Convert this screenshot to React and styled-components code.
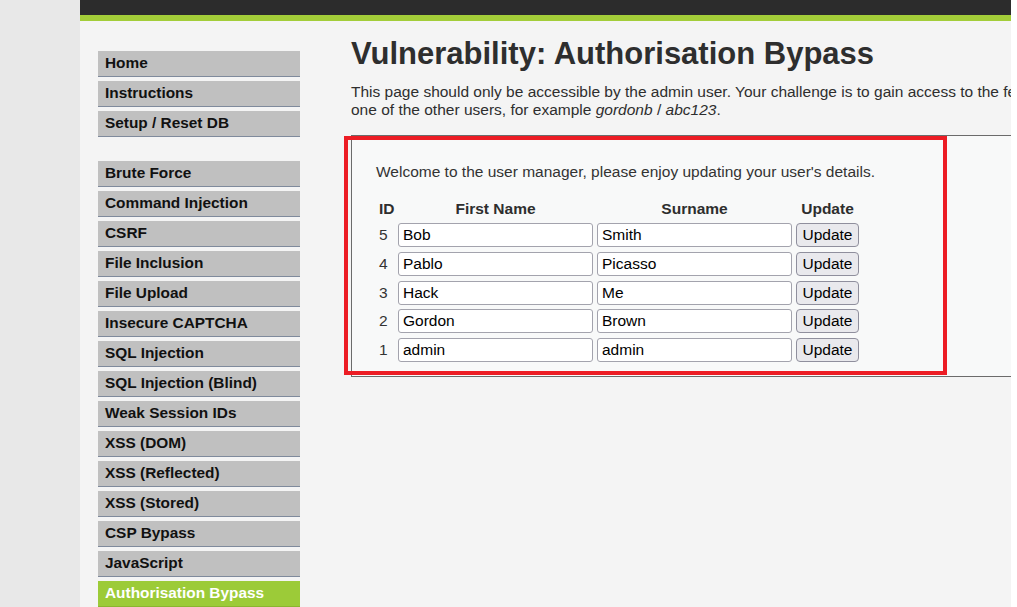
import React from 'react';
import styled, { createGlobalStyle } from 'styled-components';

const GlobalStyle = createGlobalStyle`
    html, body {
        margin: 0;
        padding: 0;
        background: #ffffff;
    }
    body {
        font-family: "Liberation Sans", Arial, sans-serif;
    }
`

const menuGroups = [
    ['Home', 'Instructions', 'Setup / Reset DB'],
    [
        'Brute Force',
        'Command Injection',
        'CSRF',
        'File Inclusion',
        'File Upload',
        'Insecure CAPTCHA',
        'SQL Injection',
        'SQL Injection (Blind)',
        'Weak Session IDs',
        'XSS (DOM)',
        'XSS (Reflected)',
        'XSS (Stored)',
        'CSP Bypass',
        'JavaScript',
        'Authorisation Bypass',
    ],
];

const users = [
    { id: 5, first: 'Bob', last: 'Smith' },
    { id: 4, first: 'Pablo', last: 'Picasso' },
    { id: 3, first: 'Hack', last: 'Me' },
    { id: 2, first: 'Gordon', last: 'Brown' },
    { id: 1, first: 'admin', last: 'admin' },
];

const ACTIVE = 'Authorisation Bypass';

export default function App() {
    return (
        <Page>
            <GlobalStyle />
            <Gutter />
            <Main>
                <Header />
                <Body>
                    <Menu>
                        {menuGroups.map((group, i) => (
                            <MenuGroup key={i}>
                                {group.map(item => (
                                    <MenuItem key={item} active={item === ACTIVE}>
                                        {item}
                                    </MenuItem>
                                ))}
                            </MenuGroup>
                        ))}
                    </Menu>

                    <Content>
                        <Title>Vulnerability: Authorisation Bypass</Title>
                        <Intro>
                            This page should only be accessible by the admin user. Your challenge is to gain access to the features using
                            <br />
                            one of the other users, for example <i>gordonb</i> / <i>abc123</i>.
                        </Intro>

                        <Panel>
                            <Welcome>Welcome to the user manager, please enjoy updating your user's details.</Welcome>
                            <UserGrid>
                                <HeadCell align="left">ID</HeadCell>
                                <HeadCell>First Name</HeadCell>
                                <HeadCell>Surname</HeadCell>
                                <HeadCell>Update</HeadCell>
                                {users.map(u => (
                                    <React.Fragment key={u.id}>
                                        <IdCell>{u.id}</IdCell>
                                        <TextInput defaultValue={u.first} />
                                        <TextInput defaultValue={u.last} />
                                        <UpdateButton>Update</UpdateButton>
                                    </React.Fragment>
                                ))}
                            </UserGrid>
                        </Panel>
                    </Content>
                </Body>
            </Main>
            <Highlight />
        </Page>
    );
}

const Page = styled.div`
    position: relative;
    width: 1017px;
    height: 607px;
    overflow: hidden;
    display: flex;
    background: #ffffff;
`

const Gutter = styled.div`
    width: 80px;
    flex-shrink: 0;
    background: #e8e8e8;
`

const Main = styled.div`
    width: 931px;
    flex-shrink: 0;
    background: #f4f4f4;
    overflow: hidden;
    display: flex;
    flex-direction: column;
`

const Header = styled.div`
    height: 15px;
    background: #2c2c2c;
    border-bottom: 6px solid #a3cd39;
    flex-shrink: 0;
`

const Body = styled.div`
    display: flex;
    align-items: flex-start;
`

const Menu = styled.div`
    width: 202px;
    flex-shrink: 0;
    margin-left: 18px;
    padding-top: 30px;
    display: flex;
    flex-direction: column;
    gap: 24px;
`

const MenuGroup = styled.div`
    display: flex;
    flex-direction: column;
    gap: 4px;
`

const MenuItem = styled.div`
    height: 25px;
    line-height: 24px;
    padding-left: 7px;
    font-size: 15.4px;
    font-weight: bold;
    color: ${props => props.active ? '#ffffff' : '#111111'};
    background: ${props => props.active ? '#9ccb38' : '#c0c0c0'};
    border-bottom: 1px solid ${props => props.active ? '#8ab530' : '#7f8a9c'};
    white-space: nowrap;
`

const Content = styled.div`
    width: 760px;
    flex-shrink: 0;
    margin-left: 51px;
    padding-top: 15px;
    color: #333333;
`

const Title = styled.h1`
    margin: 0;
    font-size: 31px;
    line-height: 36px;
    font-weight: bold;
    color: #2e2e2e;
    white-space: nowrap;
`

const Intro = styled.p`
    margin: 11px 0 16px;
    font-size: 15.5px;
    line-height: 18px;
    white-space: nowrap;
    color: #2e2e2e;
`

const Panel = styled.div`
    border: 1px solid #6b6b6b;
    background: #f8f9f9;
    padding: 27px 24px 14px;
`

const Welcome = styled.p`
    margin: 0 0 19px;
    font-size: 15.5px;
    line-height: 18px;
    color: #333333;
`

const UserGrid = styled.div`
    display: grid;
    grid-template-columns: 18px 195px 195px 63px;
    column-gap: 4px;
    row-gap: 4.75px;
    align-items: center;
`

const HeadCell = styled.div`
    font-size: 15.5px;
    font-weight: bold;
    line-height: 18px;
    color: #2e2e2e;
    text-align: ${props => props.align || 'center'};
    padding-left: ${props => props.align === 'left' ? '3px' : '0'};
    margin-bottom: 0.25px;
    white-space: nowrap;
`

const IdCell = styled.div`
    font-size: 15.5px;
    line-height: 18px;
    padding-left: 3px;
    color: #333333;
`

const TextInput = styled.input`
    box-sizing: border-box;
    width: 100%;
    height: 24px;
    margin: 0;
    padding: 0 4px;
    font-family: "Liberation Sans", Arial, sans-serif;
    font-size: 15.5px;
    color: #000000;
    background: #ffffff;
    border: 1px solid #a3a3ad;
    border-radius: 3px;
    outline: none;
`

const UpdateButton = styled.button`
    box-sizing: border-box;
    width: 63px;
    height: 24px;
    margin: 0;
    padding: 0;
    font-family: "Liberation Sans", Arial, sans-serif;
    font-size: 15.5px;
    color: #000000;
    background: #e9e9ed;
    border: 1px solid #8f8f9d;
    border-radius: 4px;
`

const Highlight = styled.div`
    position: absolute;
    left: 344px;
    top: 136px;
    width: 603px;
    height: 239px;
    box-sizing: border-box;
    border: 4.5px solid #ec1c24;
    pointer-events: none;
`
